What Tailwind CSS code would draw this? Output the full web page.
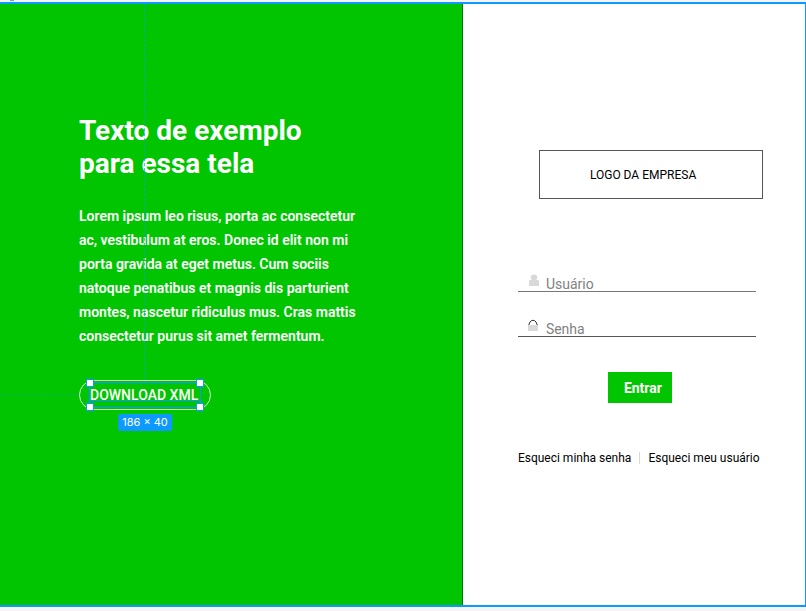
<!DOCTYPE html>
<html lang="pt-BR">
<head>
<meta charset="utf-8">
<meta name="viewport" content="width=device-width, initial-scale=1">
<title>Login</title>
<script src="https://cdn.jsdelivr.net/npm/@tailwindcss/browser@4"></script>
</head>
<body class="relative flex min-h-screen flex-col bg-[#f5f5f5] pt-0.5 pb-1 font-['Roboto',sans-serif]">
  <div class="absolute top-0 left-2.5 h-px w-1 bg-[#4dabf7]"></div>
  <div class="relative flex grow border-y-2 border-r border-[#0d99ff] bg-white">
    <main class="w-[57.5%] border-r border-[#007d00] bg-[#00c500] pt-[110px] pl-[79px] text-white">
      <h1 class="text-[28px] leading-[33px] font-bold">Texto de exemplo<br>para essa tela</h1>
      <p class="mt-6 text-[14px] leading-[24px] font-semibold">Lorem ipsum leo risus, porta ac consectetur<br>ac, vestibulum at eros. Donec id elit non mi<br>porta gravida at eget metus. Cum sociis<br>natoque penatibus et magnis dis parturient<br>montes, nascetur ridiculus mus. Cras mattis<br>consectetur purus sit amet fermentum.</p>
      <div class="relative mt-8 w-fit">
        <button type="button" class="block h-[30px] w-[132px] rounded-full border border-white/80 px-2.5 text-left text-[14px] font-medium">DOWNLOAD XML</button>
        <!-- Selection frame with its four handles -->
        <div class="pointer-events-none absolute inset-x-2.5 top-0.5 bottom-0.5 border border-[#0d99ff]">
          <div class="absolute inset-x-0 bottom-1.5 h-px bg-[#0d99ff]"></div>
          <span class="absolute -top-1 -left-1 size-2 border border-[#0d99ff] bg-white"></span>
          <span class="absolute -top-1 -right-1 size-2 border border-[#0d99ff] bg-white"></span>
          <span class="absolute -bottom-1 -left-1 size-2 border border-[#0d99ff] bg-white"></span>
          <span class="absolute -right-1 -bottom-1 size-2 border border-[#0d99ff] bg-white"></span>
        </div>
        <div class="absolute top-full left-1/2 mt-1 -translate-x-1/2 rounded-xs bg-[#0d99ff] px-1 font-['Inter',sans-serif] text-[11px] leading-[17px] whitespace-nowrap">186 × 40</div>
        <!-- Alignment guides -->
        <div class="absolute bottom-full left-[65px] h-[376px] border-l border-dashed border-[#0d99ff]/70"></div>
        <div class="absolute top-[15px] right-full w-[79px] border-t border-dashed border-[#0d99ff]/40"></div>
      </div>
    </main>
    <section class="flex grow flex-col pt-[146px] pl-[55px]">
      <div class="ml-[21px] flex h-[49px] w-[224px] items-center border border-[#555] pt-px pl-[50px] text-[12px] text-black">LOGO DA EMPRESA</div>
      <form class="mt-[70px] w-[238px]">
        <div class="flex h-[23px] items-center gap-1.5 border-b border-[#777] pl-2.5">
          <label for="user" class="shrink-0" aria-label="Usuário">
            <svg class="block h-3 w-3" viewBox="0 0 12 12"><ellipse cx="6" cy="3.500" rx="3.300" ry="3" fill="#d9d9d9"/><path fill="#d9d9d9" d="M1 7Q1 6 2 6h8q1 0 1 1v5H1Z"/></svg>
          </label>
          <input id="user" type="text" placeholder="Usuário" class="min-w-0 grow pt-2 text-[14px] leading-[16px] outline-none placeholder:text-[#828282]">
        </div>
        <div class="mt-[22px] flex h-[23px] items-center gap-1.5 border-b border-[#555] pl-2.5">
          <label for="password" class="shrink-0" aria-label="Senha">
            <svg class="block h-3 w-3" viewBox="0 0 12 12"><path fill="#d9d9d9" d="M0 6h10v6H0Z"/><path fill="none" stroke="#333" d="M.7 6 2 3Q3 1.300 5 1.300T8 3L9.300 6"/></svg>
          </label>
          <input id="password" type="password" placeholder="Senha" class="min-w-0 grow pt-2 text-[14px] leading-[16px] outline-none placeholder:text-[#828282]">
        </div>
        <button type="submit" class="mt-[35px] ml-[90px] block h-[31px] w-16 bg-[#00c500] pt-0.5 pl-1.5 text-[14px] font-bold text-white">Entrar</button>
      </form>
      <nav class="mt-12 flex items-center gap-2 text-[12px] leading-[14px] text-black">
        <a href="#">Esqueci minha senha</a>
        <span class="h-3 w-px bg-[#d9d9d9]"></span>
        <a href="#">Esqueci meu usuário</a>
      </nav>
    </section>
  </div>
</body>
</html>
